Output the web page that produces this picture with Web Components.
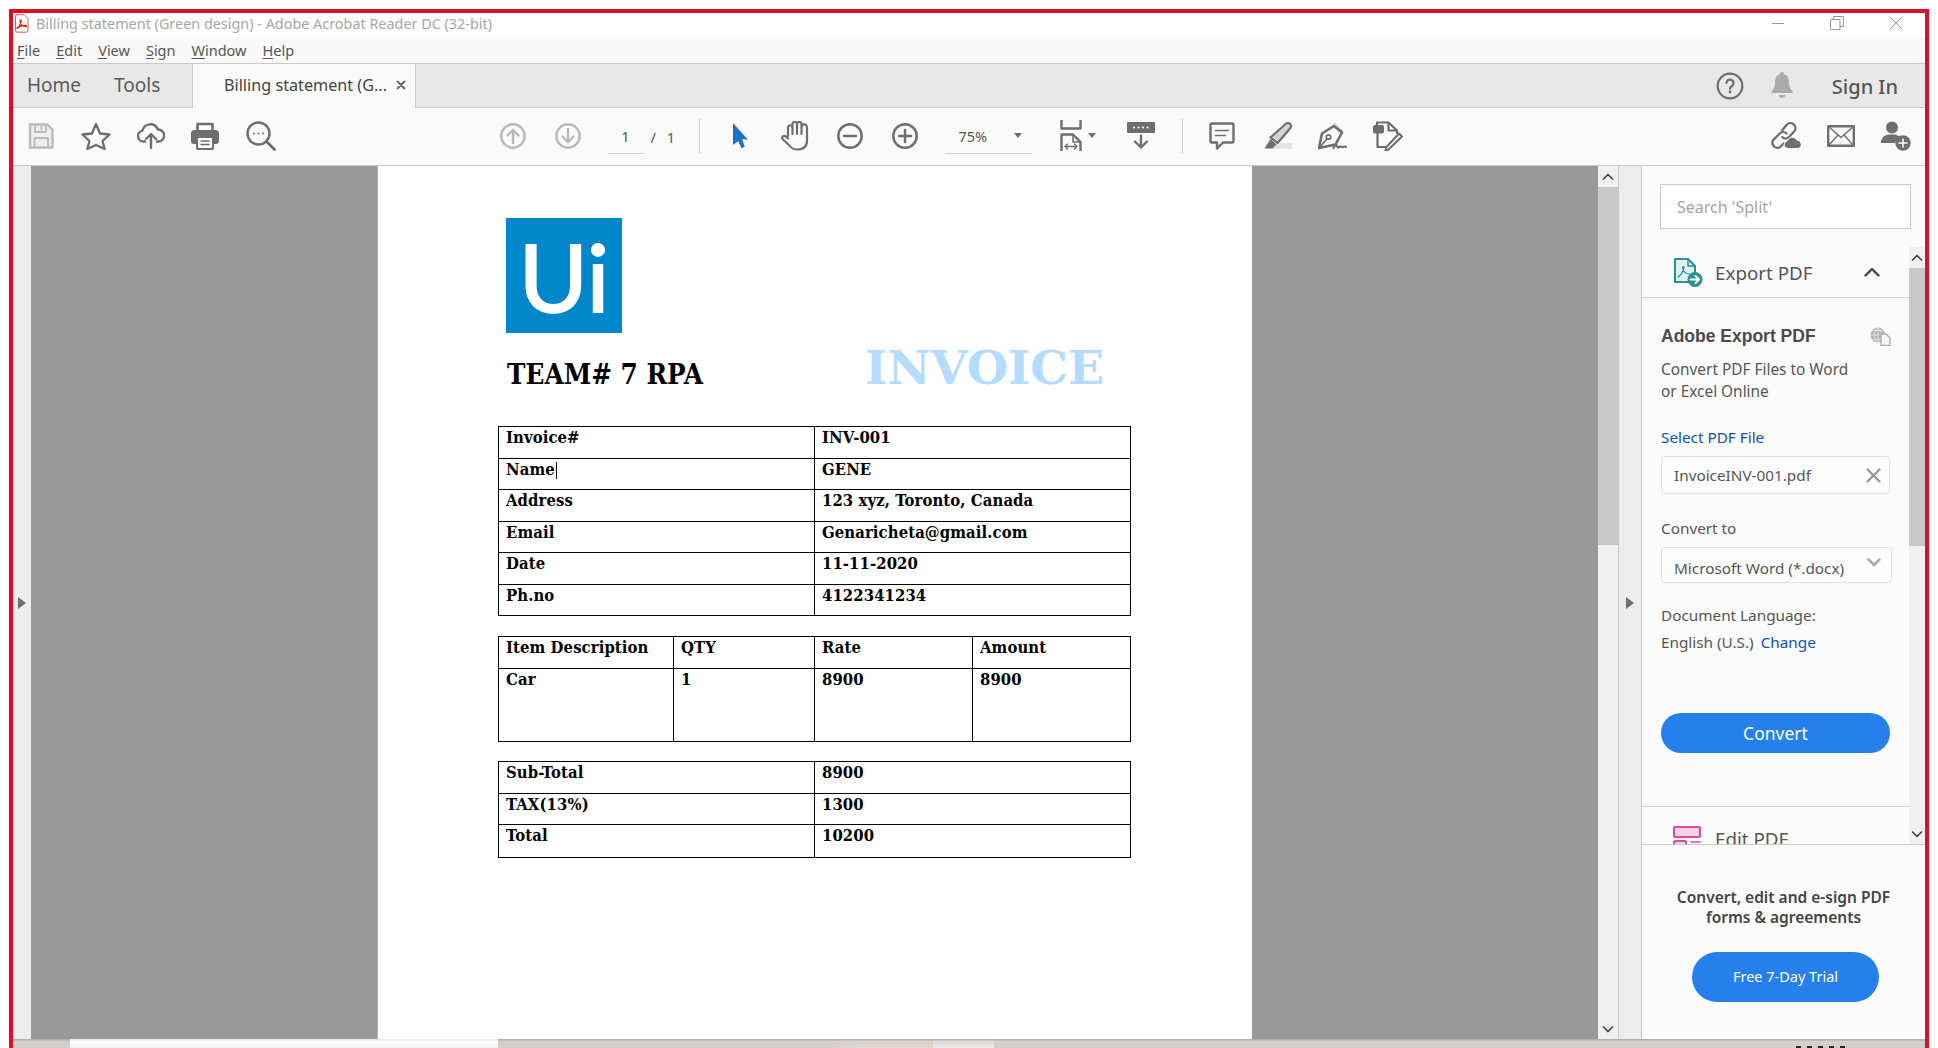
<!DOCTYPE html>
<html lang="en"><head><meta charset="utf-8"><title>Billing statement</title>
<style>
html,body{margin:0;height:1048px;overflow:hidden;background:#fff}
body{font-family:"Noto Sans","Open Sans",sans-serif}
</style></head><body>
<acro-window>
  <title-bar></title-bar>
  <menu-bar></menu-bar>
  <tab-strip></tab-strip>
  <tool-bar></tool-bar>
  <doc-area></doc-area>
  <task-strip></task-strip>
</acro-window>
<script>
const G='#6e6e6e';
const S=(w,h,b)=>`<svg xmlns="http://www.w3.org/2000/svg" width="${w}" height="${h}" viewBox="0 0 ${w} ${h}" fill="none" stroke-linecap="round" stroke-linejoin="round">${b}</svg>`;
const ICONS={
acro:S(15,19,`<path d="M1.5 2.2a1.5 1.5 0 0 1 1.5-1.5h7l4 4v12a1.5 1.5 0 0 1-1.5 1.5H3a1.5 1.5 0 0 1-1.5-1.5z" fill="#fff" stroke="#e2574c" stroke-width="1"/><path d="M3 14c2-1 3.500-3.500 4-7 .2-1.600-1-1.600-1 0 .2 3 2 5.500 6 5.500 1 0 1-1-1-1-3 0-6 1-8 3z" stroke="#d9291c" stroke-width="1.300"/>`),
min:S(14,3,`<path d="M1 1.500h12" stroke="#999" stroke-linecap="butt"/>`),
restore:S(14,14,`<path d="M.5 3.500h9.500v10H.5zM3.500 3.500v-3h10v10H10" stroke="#999" stroke-linecap="butt"/>`),
close:S(14,14,`<path d="M1 1l12 12M13 1L1 13" stroke="#888" stroke-width=".9"/>`),
x:S(10,10,`<path d="M1.500 1.500l7 7M8.500 1.500l-7 7" stroke="#666" stroke-width="1.800"/>`),
help:S(28,28,`<circle cx="14" cy="14" r="12.300" stroke="${G}" stroke-width="2.200"/><path d="M10.500 11a3.500 3.500 0 1 1 5.400 3c-1.300.8-1.900 1.500-1.900 2.800" stroke="${G}" stroke-width="2.200"/><circle cx="14" cy="20" r="1.400" fill="${G}"/>`),
bell:S(22,27,`<path d="M11 0a2 2 0 0 1 2 2.300C17 3.500 18 7 18 11c0 4 1.500 6 3.500 8.500V21H.5v-1.500C2.500 17 4 15 4 11c0-4 1-7.500 5-8.700A2 2 0 0 1 11 0z" fill="#aaa"/><path d="M8 23h6a3 3 0 0 1-6 0z" fill="#aaa"/>`),
save:S(26,26,`<path d="M2 1.500h17.500L24.500 6.500V24.500H2z" fill="#eee" stroke="#bbb" stroke-width="2.400"/><path d="M7 2v7h11V2" stroke="#bbb" stroke-width="2"/><path d="M13.500 3.500v3" stroke="#bbb" stroke-width="2"/><path d="M6.500 24v-9h13.500v9" stroke="#bbb" stroke-width="2"/>`),
star:S(30,28,`<path d="M15 2l4 9.500 9.500 1-7 6.500 2.200 8L15 23l-8.700 4 2.200-8-7-6.500 9.500-1z" stroke="${G}" stroke-width="2.300"/>`),
cloud:S(28,27,`<path d="M8 19.500H6.500A5.500 5.500 0 0 1 5.500 8.600 8 8 0 0 1 20.800 7.500 5.900 5.900 0 0 1 21.500 19.500H20" stroke="${G}" stroke-width="2.400"/><path d="M14 26V12.500M9 17l5-5 5 5" stroke="${G}" stroke-width="2.400"/>`),
print:S(28,28,`<path d="M6.500 9V2h15v7" stroke="${G}" stroke-width="2.600"/><path d="M3.500 8h21A3.500 3.500 0 0 1 28 11.500V19a3 3 0 0 1-3 3H3a3 3 0 0 1-3-3v-7.500A3.500 3.500 0 0 1 3.500 8z" fill="${G}"/><rect x="6" y="15" width="16" height="12" rx="1" fill="#fff" stroke="${G}" stroke-width="2"/><path d="M10 19h8M10 22.500h8" stroke="${G}" stroke-width="1.500"/>`),
search:S(30,30,`<circle cx="12.500" cy="12.500" r="11" stroke="${G}" stroke-width="2.400"/><path d="M20.500 20.500l8 8" stroke="${G}" stroke-width="2.800"/><path d="M8 12.500h.01M12.500 12.500h.01M17 12.500h.01" stroke="${G}" stroke-width="2"/>`),
up:S(26,26,`<circle cx="13" cy="13" r="11.700" stroke="#b8b8b8" stroke-width="2.400"/><path d="M13 20V7M7.500 12.500L13 7l5.500 5.500" stroke="#b8b8b8" stroke-width="2.400"/>`),
down:S(26,26,`<circle cx="13" cy="13" r="11.700" stroke="#b8b8b8" stroke-width="2.400"/><path d="M13 6v13M7.500 13.500L13 19l5.500-5.500" stroke="#b8b8b8" stroke-width="2.400"/>`),
arrow:S(16,26,`<path d="M0 0L15 16.700 9.300 16 11.700 24 8.300 25 5.300 18.300 0 21.700z" fill="#1b72ce"/>`),
hand:S(28,30,`<path d="M7 15V6.500a2.200 2.200 0 0 1 4.500 0V13M11.500 13V3.200a2.200 2.200 0 0 1 4.500 0V13M16 13V3.200a2.200 2.200 0 0 1 4.500 0V13M20.500 13V6.200a2.700 2.700 0 0 1 5.500 0V19.500c0 6-4 9-10 9-4.500 0-6.500-2-8.500-5L1.500 18c-1.400-2.300 2-4.300 3.600-2.300L7 17.500" stroke="${G}" stroke-width="2.200"/>`),
minus:S(26,26,`<circle cx="13" cy="13" r="11.700" stroke="${G}" stroke-width="2.500"/><path d="M7 13h12" stroke="${G}" stroke-width="2.500"/>`),
plus:S(26,26,`<circle cx="13" cy="13" r="11.700" stroke="${G}" stroke-width="2.500"/><path d="M7 13h12M13 7v12" stroke="${G}" stroke-width="2.500"/>`),
fit:S(22,31,`<path d="M1.500 0v8.500h19V0" stroke="${G}" stroke-width="2.400" stroke-linecap="butt"/><path d="M1.500 31V14.500h11.500l7.500 7.500v9" stroke="${G}" stroke-width="2.400" stroke-linecap="butt"/><path d="M13 15v7h7" stroke="${G}" stroke-width="1.500"/><path d="M5 26.500h12M7.500 24l-2.500 2.500L7.500 29M14.500 24l2.500 2.500L14.500 29" stroke="${G}" stroke-width="1.300"/>`),
keyb:S(28,27,`<rect x="0" y="0" width="28" height="11" rx="1" fill="${G}"/><path d="M7 5.500h.01M11.500 5.500h.01M16 5.500h.01M20.500 5.500h.01" stroke="#fff" stroke-width="2.200"/><path d="M14 13.500V25.500M8 19.500l6 6 6-6" stroke="${G}" stroke-width="2.400"/>`),
comment:S(26,28,`<path d="M3 1.500h20a1.500 1.500 0 0 1 1.500 1.500v16a1.500 1.500 0 0 1-1.500 1.500H14l-6 6v-6H3A1.500 1.500 0 0 1 1.500 19V3A1.500 1.500 0 0 1 3 1.500z" stroke="${G}" stroke-width="2.400"/><path d="M6.500 8.500h13M6.500 13.500h10" stroke="${G}" stroke-width="1.500"/>`),
hilite:S(29,28,`<rect x="9" y="21" width="19" height="6" fill="#e4e4e4" stroke="none"/><path d="M21 2.500a3 3 0 0 1 5.500 3.500L13.500 21 6.500 15.500z" fill="#d4d4d4" stroke="${G}" stroke-width="2.200"/><path d="M6.500 17l-6 9.500h8l4-4z" fill="${G}"/>`),
pen:S(29,28,`<path d="M16.500 1l8.500 8-1.500 2-8.500-7.500z" fill="#dcdcdc" stroke="#cfcfcf"/><path d="M1 26L4 11.500 16 4l8 6.500-6.500 12z" fill="#fafafa" stroke="${G}" stroke-width="2.600"/><path d="M1.500 25.500l7.500-8.500" stroke="${G}" stroke-width="1.800"/><circle cx="10.500" cy="15" r="2.200" stroke="${G}" stroke-width="1.800"/><path d="M15.500 26c1.500-3 3-4 3.500-2s2 1.500 3 .5 1.500 1.500 3 .5 2-.5 3 0" stroke="${G}" stroke-width="2.200"/>`),
fill:S(30,30,`<path d="M4 4V1.500h11.500L24 9.500V12" stroke="${G}" stroke-width="2.200"/><path d="M15.500 2v7.500H24" stroke="${G}" stroke-width="2.200"/><path d="M4.500 13v13h7.500" stroke="${G}" stroke-width="2.200"/><rect x="0" y="4" width="11" height="8.500" rx="2" fill="${G}"/><path d="M26 12.500l3 3L15.500 28.500l-3 1 .5-3z" fill="#fafafa" stroke="${G}" stroke-width="2"/>`),
link:S(31,29,`<path d="M12 9.500l4.500-5.500a5 5 0 0 1 7.800 6.300l-5 5.500a5 5 0 0 1-7 .4" stroke="${G}" stroke-width="2.300"/><path d="M16.500 12.500a5 5 0 0 0-7 .2l-6 6a5 5 0 0 0 7 7l3.500-3.500" stroke="${G}" stroke-width="2.300"/><path d="M17.500 27.500a3.700 3.700 0 0 1-.5-7.300 5.400 5.400 0 0 1 10-1 4.200 4.200 0 0 1 1 8.300z" fill="${G}" stroke="#fafafa"/>`),
mail:S(28,22,`<rect x="1.200" y="1.200" width="25.600" height="19.600" stroke="${G}" stroke-width="2.400" stroke-linecap="butt"/><path d="M2 2l12 10.500L26 2M2 20l8.500-9.500M26 20l-8.500-9.500" stroke="${G}" stroke-width="1.400"/>`),
person:S(31,30,`<circle cx="12" cy="6.500" r="6" fill="${G}"/><path d="M1 22c0-5 3-7.500 7-8.500h7c2.500.5 4 1.500 5 3a8.500 8.500 0 0 0-5 5.500z" fill="${G}"/><circle cx="23" cy="22" r="7.700" fill="${G}"/><path d="M23 18v8M19 22h8" stroke="#fff" stroke-width="1.500"/>`),
caret:S(8,5,`<path d="M0 0h8L4 5z" fill="${G}"/>`),
tright:S(8,12,`<path d="M0 0l8 6-8 6z" fill="${G}"/>`),
chev:S(12,8,`<path d="M1.500 6L6 1.500 10.500 6" stroke="#444" stroke-width="1.700"/>`),
chevd:S(12,8,`<path d="M1.500 2L6 6.500 10.500 2" stroke="#444" stroke-width="1.700"/>`),
chevb:S(16,10,`<path d="M1.500 8.500L8 2l6.500 6.500" stroke="#444" stroke-width="2.400"/>`),
selchev:S(14,9,`<path d="M1.500 1.500L7 7l5.500-5.500" stroke="#aaa" stroke-width="2.600"/>`),
fx:S(15,15,`<path d="M1.500 1.500l12 12M13.500 1.500l-12 12" stroke="#999" stroke-width="2.400"/>`),
export:S(29,29,`<path d="M1 1h13l7 7v16H1z" fill="#dff0f0" stroke="#2a9092" stroke-width="2"/><path d="M14 1v7h7" stroke="#2a9092" stroke-width="1.500"/><path d="M4 19c3-2 5-5 6-9 .3-2-1.500-2-1.300 0 .5 3.500 3 6 7 6" stroke="#2a9092" stroke-width="1.200"/><circle cx="21" cy="21.500" r="7.500" fill="#2a9092"/><path d="M16.500 21.500h8M21.500 18l3.500 3.500-3.500 3.500" stroke="#fff" stroke-width="2"/>`),
globe:S(21,19,`<circle cx="8" cy="8" r="7.500" fill="#b4b4b4"/><path d="M.5 8h15M8 .5v15M2.500 3.500h11M2.500 12.500h11M8 .5c-5 4-5 11 0 15M8 .5c5 4 5 11 0 15" stroke="#eee" stroke-width=".7"/><path d="M11 7h5l4 4v7.500h-9z" fill="#f4f4f4" stroke="#aaa" stroke-width="1.300"/>`),
edit:S(28,24,`<rect x="1" y="1" width="26" height="10" rx="1" fill="#f6d3e8" stroke="#e0489c" stroke-width="2"/><rect x="1" y="15" width="12" height="10" rx="1" fill="#f6d3e8" stroke="#e0489c" stroke-width="2"/><path d="M18 16h9M18 22h9" stroke="#e0489c" stroke-width="1.500"/>`)
};
const def=(name,html)=>customElements.define(name,class extends HTMLElement{
  constructor(){super();this.attachShadow({mode:'open'}).innerHTML=typeof html==='function'?html(this):html;}
});
customElements.define('ui-icon',class extends HTMLElement{
  connectedCallback(){if(!this.shadowRoot){this.attachShadow({mode:'open'}).innerHTML=`<style>:host{display:inline-flex;flex:none;line-height:0}</style>`+(ICONS[this.getAttribute('name')]||'');}}
});
def('acro-window',`<style>:host{display:flex;flex-direction:column;box-sizing:border-box;width:1920px;height:1039px;margin:9px 0 0 9px;border:solid #dc0f25;border-width:4px 4px 0;background:#fafafa;color:#555;overflow:hidden}</style><slot></slot>`);
def('title-bar',`<style>
:host{display:flex;align-items:center;height:25px;background:#fff;flex:none;padding:0 0 5px 1px;box-sizing:border-box}
.t{margin-left:7px;font-size:14.400px;color:#a6a6a6;white-space:nowrap}
.c{margin-left:auto;display:flex;align-items:center;padding-right:22px;gap:45px}
</style><ui-icon name="acro"></ui-icon><span class="t">Billing statement (Green design) - Adobe Acrobat Reader DC (32-bit)</span>
<div class="c"><ui-icon name="min"></ui-icon><ui-icon name="restore"></ui-icon><ui-icon name="close"></ui-icon></div>`);
def('menu-bar',`<style>
:host{display:flex;align-items:center;height:26px;background:#f9f9f9;flex:none;box-sizing:border-box;border-bottom:1px solid #c9c9c9;padding-left:4px;gap:16px;font-size:14.500px;color:#555;padding-bottom:1px}
u{text-underline-offset:2px}
</style><span><u>F</u>ile</span><span><u>E</u>dit</span><span><u>V</u>iew</span><span><u>S</u>ign</span><span><u>W</u>indow</span><span><u>H</u>elp</span>`);
def('tab-strip',`<style>
:host{display:flex;height:44px;background:#e8e8e8;flex:none;box-sizing:border-box;border-bottom:1px solid #cacaca;font-size:19px;color:#5a5a5a}
.n{display:flex;align-items:center;width:179px;padding:0 0 2px 14px;gap:33px;box-sizing:border-box}
.a{display:flex;align-items:center;width:224px;height:44px;background:#fafafa;border:solid #cacaca;border-width:0 1px;font-size:16.200px;color:#444;padding:0 0 2px 31px;box-sizing:border-box;gap:9px}
.r{margin-left:auto;display:flex;align-items:center;padding-right:27px}
.si{font-size:20px;margin-left:39px;color:#555;font-weight:500;padding-top:2px}
.b{margin-left:26px}
</style><div class="n"><span>Home</span><span>Tools</span></div>
<div class="a"><span>Billing statement (G...</span><ui-icon name="x"></ui-icon></div>
<div class="r"><ui-icon name="help" style="margin-right:1px"></ui-icon><ui-icon class="b" name="bell"></ui-icon><span class="si">Sign In</span></div>`);
def('tool-bar',`<style>
:host{display:flex;align-items:center;height:58px;flex:none;background:#fafafa;box-sizing:border-box;border-bottom:1px solid #cacaca;font-size:14.500px;color:#555;padding:0 2px 2px 0}
.s{width:55px;height:55px;display:flex;align-items:center;justify-content:center;flex:none}
.f{box-sizing:border-box;display:flex;align-items:center;height:36px;margin-top:1px;border-bottom:1px solid #cfcfcf;flex:none}
.sep{width:1px;height:34px;background:#cfcfcf;flex:none;margin-top:1px}
.pn{width:36px;margin-left:12px;justify-content:center}
.of{width:55px;padding-left:7px;box-sizing:border-box;word-spacing:7px;flex:none;margin-top:2px}
.z{width:87px;margin-left:12.500px;padding-left:14px;padding-right:10px;justify-content:space-between}
.e{margin-left:auto;display:flex}
.g{display:flex;align-items:center;gap:6px;margin-left:16px}
</style>
<div class="s"><ui-icon name="save"></ui-icon></div><div class="s"><ui-icon name="star"></ui-icon></div><div class="s"><ui-icon name="cloud"></ui-icon></div><div class="s" style="margin-left:-1px"><ui-icon name="print"></ui-icon></div><div class="s" style="margin-left:1px"><ui-icon name="search"></ui-icon></div>
<div class="s" style="margin-left:197.500px"><ui-icon name="up"></ui-icon></div><div class="s"><ui-icon name="down"></ui-icon></div>
<div class="f pn">1</div><div class="of">/ 1</div><div class="sep"></div>
<div class="s" style="margin-left:14px"><ui-icon name="arrow"></ui-icon></div><div class="s" style="margin-left:-1px"><ui-icon name="hand"></ui-icon></div><div class="s" style="margin-left:-.5px"><ui-icon name="minus"></ui-icon></div><div class="s"><ui-icon name="plus"></ui-icon></div>
<div class="f z"><span>75%</span><ui-icon name="caret"></ui-icon></div>
<div class="s" style="margin-left:12px;justify-content:flex-start"><div class="g"><ui-icon name="fit"></ui-icon><ui-icon name="caret"></ui-icon></div></div>
<div class="s" style="margin-left:15px"><ui-icon name="keyb"></ui-icon></div><div class="sep" style="margin-left:13px"></div>
<div class="s" style="margin-left:12px"><ui-icon name="comment"></ui-icon></div><div class="s" style="margin-left:1px"><ui-icon name="hilite"></ui-icon></div><div class="s" style="margin-left:-1px"><ui-icon name="pen"></ui-icon></div><div class="s" style="margin-left:1px"><ui-icon name="fill"></ui-icon></div>
<div class="e"><div class="s"><ui-icon name="link"></ui-icon></div><div class="s"><ui-icon name="mail"></ui-icon></div><div class="s"><ui-icon name="person"></ui-icon></div></div>`);
def('scroll-bar',t=>`<style>
:host{display:flex;flex-direction:column;flex:none;background:#f0f0f0;box-sizing:border-box}
.b{height:21px;display:flex;align-items:center;justify-content:center;flex:none}
.th{background:#c8c8c8;flex:none;height:${t.getAttribute('thumb')}px}
.sp{flex:1}
</style><div class="b"><ui-icon name="chev"></ui-icon></div><div class="th"></div><div class="sp"></div><div class="b"><ui-icon name="chevd"></ui-icon></div>`);
def('doc-area',`<style>
:host{display:flex;flex:1;min-height:0}
.l{width:18px;background:#ececec;flex:none;display:flex;align-items:center;justify-content:center}
.v{flex:1;background:#999;display:flex;justify-content:center;overflow:hidden}
scroll-bar{width:20px}
.r{width:22px;background:#ececec;border:solid #c8c8c8;border-width:0 1px;flex:none;display:flex;align-items:center;justify-content:center}
</style><div class="l"><ui-icon name="tright"></ui-icon></div><div class="v"><invoice-page></invoice-page></div><scroll-bar thumb="358"></scroll-bar><div class="r"><ui-icon name="tright"></ui-icon></div><tool-panel></tool-panel>`);
def('inv-table',t=>{
  const widths=t.getAttribute('cols').split(',');
  const rows=t.getAttribute('rows').split('|').map(r=>{const [h,...c]=r.split(';');return `<tr style="height:${h}px">${c.map(x=>`<td>${x}</td>`).join('')}</tr>`}).join('');
  return `<style>
:host{display:block}
table{border-collapse:collapse;table-layout:fixed;width:632px}
td{border:1px solid #000;padding:0 0 0 7px;vertical-align:top;font:700 16.500px/21px var(--slab);color:#000;letter-spacing:.1px;box-sizing:border-box;white-space:nowrap;font-stretch:condensed}
i{display:inline-block;width:1px;height:17px;background:#000;vertical-align:-4px;margin-left:1px}
</style><table><colgroup>${widths.map(w=>`<col style="width:${w}px">`).join('')}</colgroup>${rows}</table>`;
});
def('invoice-page',`<style>
:host{display:block;box-sizing:border-box;width:875px;height:100%;background:#fff;padding:52px 0 0 120px;--slab:"DejaVu Serif Condensed","DejaVu Serif",serif;flex:none;border-left:1px solid #b5b5b5}
.logo{width:116px;height:115px;margin-left:8px;background:#0086cb;color:#fff;font:400 94px/115px Lato,sans-serif;-webkit-text-stroke:2px #fff;display:flex;align-items:center;justify-content:center}
.hd{display:flex;align-items:baseline;margin-top:8px;height:52px;margin-left:9px}
.team{font:700 27.600px/52px var(--slab);font-stretch:condensed;color:#000;width:358px;white-space:nowrap}
.inv{font:700 47.500px/52px "DejaVu Serif",serif;color:#b4dcff;white-space:nowrap}
</style><div class="logo">Ui</div>
<div class="hd"><span class="team">TEAM# 7 RPA</span><span class="inv">INVOICE</span></div>
<inv-table style="margin-top:33px" cols="316,316" rows="32;Invoice#;INV-001|31;Name<i></i>;GENE|32;Address;123 xyz, Toronto, Canada|31;Email;Genaricheta@gmail.com|32;Date;11-11-2020|31;Ph.no;4122341234"></inv-table>
<inv-table style="margin-top:20px" cols="175,141,158,158" rows="32;Item Description;QTY;Rate;Amount|73;Car;1;8900;8900"></inv-table>
<inv-table style="margin-top:19px" cols="316,316" rows="32;Sub-Total;8900|31;TAX(13%);1300|33;Total;10200"></inv-table>`);
def('tool-panel',`<style>
:host{display:flex;flex-direction:column;width:283px;flex:none;background:#fbfbfb;font-size:15.300px;line-height:20px;color:#555}
.srch{flex:none;padding:18px 14px 18px 18px}
.box{box-sizing:border-box;height:45px;border:1px solid #c9c9c9;background:#fff;padding-left:16px;display:flex;align-items:center;font-size:16px;color:#a4a4a4}
.mid{flex:1;display:flex;min-height:0}
.sc{flex:1;overflow:hidden;min-width:0}
scroll-bar{width:16px}
.head{height:51px;box-sizing:border-box;border-bottom:1px solid #cfcfcf;display:flex;align-items:center;padding:2px 29px 0 32px;font-size:18.800px;color:#555;gap:12px}
.head ui-icon:first-child{margin-top:-2px}
.head ui-icon:last-child{margin-top:-2px}
.head span{flex:1}
.body{padding:28px 0 53px 19px;border-bottom:1px solid #cfcfcf}
h3{margin:0 0 -1px;font:700 17.500px/20px "Liberation Sans",Arial,sans-serif;color:#4b4b4b;display:flex;justify-content:space-between;padding-right:18px;align-items:center}
p{margin:14px 0 -1px;line-height:22px;font-size:15.400px}
.lb{margin-top:25px}
.blue{color:#0d54a8}
.fld{box-sizing:border-box;border:1px solid #e1e1e1;border-radius:4px;background:#fdfdfd;display:flex;align-items:center;justify-content:space-between;padding:0 8px 0 12px;margin-top:9px;width:229px;height:38px}
.btn{margin-top:61px;width:229px;height:40px;border-radius:20px;background:#2680eb;color:#fff;display:flex;align-items:center;justify-content:center;font-size:17.500px}
.ed{padding:19px 0 0 31px;display:flex;gap:14px;font-size:18.800px;color:#555;line-height:26px}
.promo{flex:none;height:195px;box-sizing:border-box;border-top:1px solid #cacaca;padding-top:42px;display:flex;flex-direction:column;align-items:center;text-align:center;font-weight:600;color:#444;font-size:15.500px}
.pb{margin:25px 0 0 4px;width:187px;height:50px;padding-bottom:2px;box-sizing:border-box;border-radius:25px;background:#2680eb;color:#fff;display:flex;align-items:center;justify-content:center;font-weight:400;font-size:14.500px}
</style>
<div class="srch"><div class="box">Search 'Split'</div></div>
<div class="mid"><div class="sc">
<div class="head"><ui-icon name="export"></ui-icon><span>Export PDF</span><ui-icon name="chevb"></ui-icon></div>
<div class="body">
<h3>Adobe Export PDF<ui-icon name="globe"></ui-icon></h3>
<p>Convert PDF Files to Word<br>or Excel Online</p>
<div class="lb blue">Select PDF File</div>
<div class="fld"><span>InvoiceINV-001.pdf</span><ui-icon name="fx"></ui-icon></div>
<div style="margin-top:24px">Convert to</div>
<div class="fld" style="width:231px;height:36px;padding:5px 10px 0 12px"><span>Microsoft Word (*.docx)</span><ui-icon name="selchev" style="margin-top:-10px"></ui-icon></div>
<div style="margin-top:22px">Document Language:</div>
<div style="margin-top:7px;margin-bottom:2px">English (U.S.) <span class="blue" style="margin-left:3px">Change</span></div>
<div class="btn">Convert</div>
</div>
<div class="ed"><ui-icon name="edit"></ui-icon><span>Edit PDF</span></div>
</div><scroll-bar thumb="278"></scroll-bar></div>
<div class="promo"><div>Convert, edit and e-sign PDF<br>forms &amp; agreements</div><div class="pb">Free 7-Day Trial</div></div>`);
def('task-strip',`<style>
:host{display:flex;height:9px;flex:none;background:linear-gradient(#a9a9a9,rgba(214,211,209,.6) 30%,rgba(214,211,209,0)),linear-gradient(90deg,#cfcccb 0,#cfcccb 794px,#e2d5cb 850px,#e2d5cb 920px,#ecebe9 920px,#ecebe9 981px,#cfcccb 981px);position:relative}
.w{width:428px;margin-left:57px;background:linear-gradient(#e6e6e6,#fff 30%,#f4f4f4)}
.tm{position:absolute;left:1783px;bottom:0;width:54px;height:2px;background:repeating-linear-gradient(90deg,#222 0 5px,transparent 5px 11px)}
</style><div class="w"></div><div class="tm"></div>`);
</script>
</body></html>
